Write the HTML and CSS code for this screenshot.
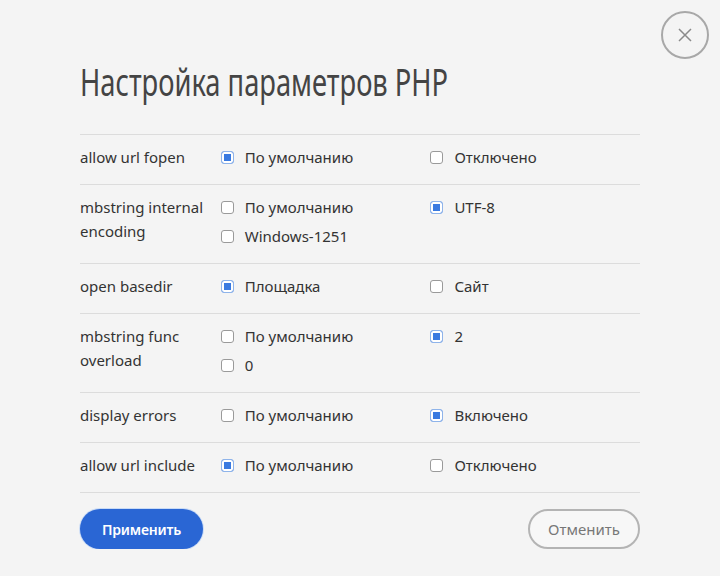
FILE: index.html
```html
<!DOCTYPE html>
<html lang="ru">
<head>
    <meta charset="UTF-8">
    <title>Настройка параметров PHP</title>
    <link rel="stylesheet" href="styles.css">
</head>
<body>
    <div class="modal">
        <button class="close-btn" aria-label="Закрыть">
            <svg width="14" height="14" viewBox="0 0 14 14"><path d="M1 1L13 13M13 1L1 13" stroke="#8a8a8a" stroke-width="1.5" fill="none"/></svg>
        </button>
        <h1 class="title"><span class="title-text">Настройка параметров PHP</span></h1>

        <div class="params">
            <div class="param-row">
                <div class="param-name">allow url fopen</div>
                <div class="param-col">
                    <label class="opt"><span class="box checked"></span>По умолчанию</label>
                </div>
                <div class="param-col">
                    <label class="opt"><span class="box"></span>Отключено</label>
                </div>
            </div>
            <div class="param-row">
                <div class="param-name">mbstring internal encoding</div>
                <div class="param-col">
                    <label class="opt"><span class="box"></span>По умолчанию</label>
                    <label class="opt"><span class="box"></span>Windows-1251</label>
                </div>
                <div class="param-col">
                    <label class="opt"><span class="box checked"></span>UTF-8</label>
                </div>
            </div>
            <div class="param-row">
                <div class="param-name">open basedir</div>
                <div class="param-col">
                    <label class="opt"><span class="box checked"></span>Площадка</label>
                </div>
                <div class="param-col">
                    <label class="opt"><span class="box"></span>Сайт</label>
                </div>
            </div>
            <div class="param-row">
                <div class="param-name">mbstring func overload</div>
                <div class="param-col">
                    <label class="opt"><span class="box"></span>По умолчанию</label>
                    <label class="opt"><span class="box"></span>0</label>
                </div>
                <div class="param-col">
                    <label class="opt"><span class="box checked"></span>2</label>
                </div>
            </div>
            <div class="param-row">
                <div class="param-name">display errors</div>
                <div class="param-col">
                    <label class="opt"><span class="box"></span>По умолчанию</label>
                </div>
                <div class="param-col">
                    <label class="opt"><span class="box checked"></span>Включено</label>
                </div>
            </div>
            <div class="param-row">
                <div class="param-name">allow url include</div>
                <div class="param-col">
                    <label class="opt"><span class="box checked"></span>По умолчанию</label>
                </div>
                <div class="param-col">
                    <label class="opt"><span class="box"></span>Отключено</label>
                </div>
            </div>
        </div>

        <div class="actions">
            <button class="btn btn-primary">Применить</button>
            <button class="btn btn-outline">Отменить</button>
        </div>
    </div>
</body>
</html>
```

FILE: styles.css
```css
body {
    margin: 0;
    padding: 0;
    background: #f4f4f4;
    font-family: "Noto Sans", "Open Sans", sans-serif;
    color: #3a3a3a;
}
.modal {
    position: relative;
    width: 560px;
    padding: 58px 80px 0 80px;
}
.close-btn {
    position: absolute;
    top: 11px;
    right: 11px;
    width: 48px;
    height: 48px;
    border-radius: 50%;
    border: 2px solid #a8a8a8;
    background: #f4f4f4;
    display: flex;
    align-items: center;
    justify-content: center;
    padding: 0;
    cursor: pointer;
}
.title {
    margin: 0 0 30px 0;
    font-family: "Noto Sans", sans-serif;
    font-weight: normal;
    font-size: 39px;
    line-height: 46px;
    color: #444;
    white-space: nowrap;
}
/* no condensed face installed, so squeeze the regular one */
.title-text {
    display: inline-block;
    transform: scaleX(0.70);
    transform-origin: left center;
}
.params {
    border-top: 1px solid #dcdcdc;
}
.param-row {
    display: flex;
    padding: 10px 0 10px 0;
    border-bottom: 1px solid #dcdcdc;
}
.param-name {
    width: 130px;
    margin-right: 11px;
    font-size: 15px;
    line-height: 24px;
    color: #333;
}
.param-col {
    width: 210px;
    display: flex;
    flex-direction: column;
}
.opt {
    display: flex;
    align-items: center;
    height: 24px;
    margin-bottom: 5px;
    font-size: 15px;
    color: #333;
    cursor: pointer;
}
.box {
    box-sizing: border-box;
    width: 13px;
    height: 13px;
    margin-right: 11px;
    border: 1px solid #9a9a9a;
    border-radius: 3px;
    background: #fff;
    flex-shrink: 0;
}
.box.checked {
    border-color: #8fb4ea;
    background: #3a7ae0;
    box-shadow: inset 0 0 0 2px #fff;
}
.actions {
    display: flex;
    justify-content: space-between;
    padding-top: 16px;
}
.btn {
    height: 40px;
    border-radius: 20px;
    font-family: "Noto Sans", sans-serif;
    font-size: 15px;
    cursor: pointer;
}
.btn-primary {
    width: 123px;
    border: none;
    background: #2a66d4;
    color: #fff;
    font-size: 14px;
    font-weight: 600;
    letter-spacing: -0.2px;
    box-shadow: 0 0 0 1px #c9dbf6;
}
.btn-outline {
    width: 112px;
    border: 2px solid #b4b4b4;
    background: #f7f7f7;
    color: #777;
}
```
